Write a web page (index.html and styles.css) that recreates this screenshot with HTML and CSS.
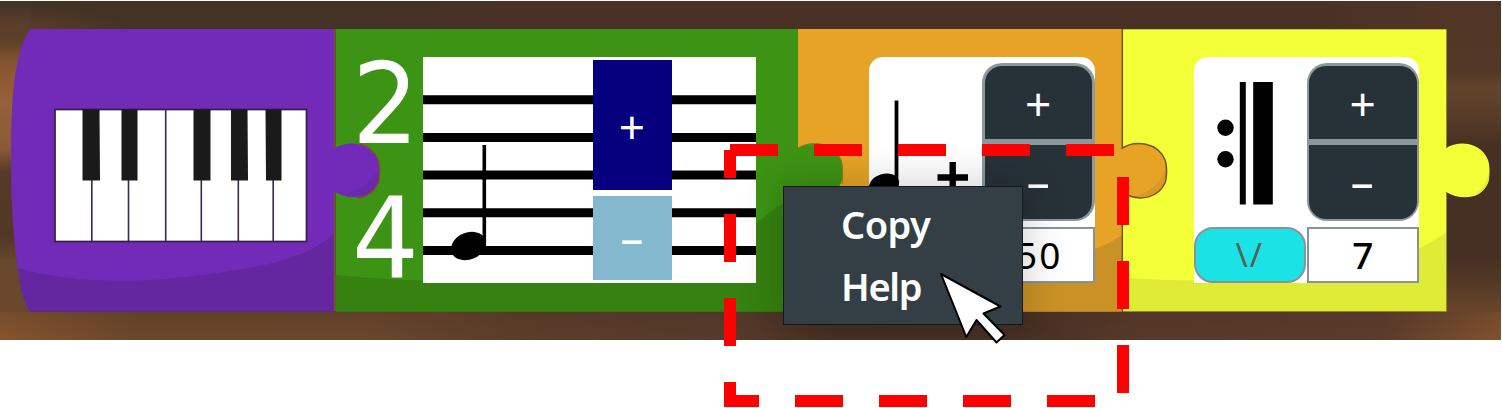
FILE: index.html
```html
<!DOCTYPE html>
<html lang="en">
<head>
<meta charset="utf-8">
<title>Music blocks</title>
<link rel="stylesheet" href="styles.css">
</head>
<body>
<main class="stage">
  <section class="board">
    <article class="block block-key">
      <svg class="shape" width="370" height="283" viewBox="11 29 370 283">
        <path fill="#722bb9" d="M30 29H335V148C348 140 371 142 378 160C380 165 380 178 378 183C371 199 350 201 335 192V311.5H30C18 294 11 230 11 160C11 100 14 52 30 29Z"/>
        <path fill="#64279f" d="M18 268C70 283 135 283 185 277C245 270 302 263 335 233V311.5H30C23 301 20 288 18 268Z"/>
        <path fill="#64279f" d="M345 194C362 190 374 181 379 166C380 172 380 178 378 183C372 196 357 200 345 194Z" opacity=".5"/>
        <path fill="none" stroke="#84483f" stroke-width="1.5" d="M334.5 29V148M360 144C371 147 376 155 378 160C380 165 380 178 378 183C375 191 367 197 358 198M334.5 193V311"/>
      </svg>
      <svg class="piano" width="254" height="135" viewBox="54 108 254 135">
        <rect x="55" y="109.500" width="251.5" height="132" fill="#fff" stroke="#302044" stroke-width="1.7"/>
        <path stroke="#3c2751" stroke-width="1.6" d="M91.800 180V241M128.500 180V241M165.700 109V241M201.300 174V241M238.300 180V241M273.200 180V241"/>
        <path fill="#1a1a1a" d="M82.500 109.500H99.500L100 180.500H82.500ZM121.500 109.500H137.500V180.500H121.500ZM193.500 109.500H210.500V180.500H193.500ZM231 109.500H247.500L248 180.500H231ZM265.500 109.500H281.500V180.500H266Z"/>
      </svg>
    </article>

    <article class="block block-meter">
      <svg class="shape" width="510" height="283" viewBox="335 29 510 283">
        <path fill="#3d9414" d="M335.500 29H798V148C811 140 834 142 841 160C843 165 843 178 841 183C834 199 813 201 798 192V311.500H335.500Z"/>
        <path fill="#358210" d="M335.500 275C470 288 700 286 756 224C775 207 788 200 798 194V311.500H335.500Z"/>
        <path fill="none" stroke="#927a1c" stroke-width="1" d="M798 148C811 140 834 142 841 160C843 165 843 178 842 184"/>
      </svg>
      <div class="meter-numbers"><span>2</span><span>4</span></div>
      <div class="staff">
        <svg class="staff-lines" width="333" height="226" viewBox="423 57 333 226">
          <path stroke="#000" stroke-width="9" d="M423 99.800H756M423 137.500H756M423 175H756M423 212.700H756M423 250.500H756"/>
          <path stroke="#000" stroke-width="3.600" d="M484.300 145V246"/>
          <ellipse cx="468.500" cy="246" rx="18" ry="13.500" transform="rotate(-22 468.500 246)"/>
        </svg>
        <div class="meter-buttons">
          <button class="up"><span class="plus">+</span></button>
          <button class="down"><span class="minus">-</span></button>
        </div>
      </div>
    </article>

    <article class="block block-tempo">
      <svg class="shape" width="370" height="283" viewBox="798 29 370 283">
        <path fill="#e6a325" d="M798 29H1122V148C1135 140 1158 142 1165 160C1168 165 1168 178 1165 183C1158 199 1137 201 1122 192V311.500H798Z"/>
        <path fill="#ca9226" d="M798 273C900 282 1060 278 1122 235V311.500H798Z"/>
        <path fill="#c88c25" opacity=".45" d="M1138 196C1153 190 1162 181 1166 167V180C1161 195 1150 199 1138 196Z"/>
        <path fill="none" stroke="#765426" stroke-width="1.500" d="M1122.300 29V148C1135 140 1158 142 1165 160C1167 165 1167 178 1165 183C1158 198 1141 201 1127 195M1122.300 194V311"/>
      </svg>
      <div class="panel">
        <svg class="symbol" width="113" height="170" viewBox="869 57 113 170">
          <path stroke="#000" stroke-width="3.800" d="M896.500 100.500V186"/>
          <ellipse cx="884" cy="185" rx="15.500" ry="11" transform="rotate(-18 884 185)"/>
          <path stroke="#000" stroke-width="6.400" d="M937.500 177.500H968M952.700 162V193"/>
        </svg>
        <div class="controls">
          <div class="stepper"><button><span class="plus">+</span></button><button><span class="minus">-</span></button></div>
          <output class="wide">50</output>
        </div>
      </div>
    </article>

    <article class="block block-repeat">
      <svg class="shape" width="369" height="283" viewBox="1123 29 369 283">
        <path fill="#f3ff37" d="M1123 29H1446V148C1459 140 1481 142 1488 160C1490 165 1490 178 1488 183C1481 199 1461 201 1446 192V311.500H1123Z"/>
        <path fill="#e0eb35" d="M1123 278C1200 282 1295 284 1370 267C1405 258 1429 244 1446 233V311.500H1123Z"/>
        <path fill="#e0eb35" d="M1473 196C1481 191 1487 184 1489 172V180C1485 191 1479 195 1473 196Z"/>
        <path fill="none" stroke="#8e8b2d" stroke-width="1" d="M1123 29H1446.500V148M1446.500 192V311.500H1123"/>
      </svg>
      <div class="panel">
        <div class="symbol-column">
          <svg class="symbol" width="113" height="170" viewBox="1193.500 57 113 170">
            <path d="M1239.300 82H1245.300V204.500H1239.300ZM1252.700 82H1272.300V204.500H1252.700Z"/>
            <circle cx="1225" cy="127.700" r="8.200"/><circle cx="1225" cy="159.300" r="8.200"/>
          </svg>
          <button class="toggle">\/</button>
        </div>
        <div class="controls">
          <div class="stepper"><button><span class="plus">+</span></button><button><span class="minus">-</span></button></div>
          <output>7</output>
        </div>
      </div>
    </article>

    <nav class="menu"><a>Copy</a><a>Help</a></nav>
  </section>

  <svg class="selection" width="1502" height="408" viewBox="0 0 1502 408">
    <path d="M730 150H1123V401H730V150" fill="none" stroke="#f00" stroke-width="12" stroke-dasharray="48 36"/>
  </svg>
  <svg class="pointer" width="70" height="76" viewBox="938 270 70 76">
    <path fill="#fff" stroke="#000" stroke-width="2" stroke-linejoin="round" d="M941 274L1000.500 306.500L983.500 313.500L1004.500 335L996.500 342.500L976.500 320L966.300 337Z"/>
  </svg>
</main>
</body>
</html>
```
FILE: styles.css
```css
* { box-sizing: border-box; }
body { margin: 0; background: #fff; font-family: "Open Sans", "Noto Sans", sans-serif; }
button { padding: 0; border: 0; font: inherit; color: #fff; }
svg { display: block; }

.stage { position: relative; width: 1502px; height: 408px; padding-top: 1px; overflow: hidden; }
.board {
  position: relative;
  display: flex;
  width: 1501px;
  height: 339px;
  padding: 28px 0 0 11px;
  overflow: hidden;
  background:
    radial-gradient(ellipse 130px 24px at 0 28px, #5e402b, #5e402b00),
    linear-gradient(#443426 0, #4e3727 28px, #85552f 62px, #96603b 100px, #8a5a38 148px, #573a27 170px, #523725 235px, #67472d 260px, #6a482d 310px, #85552f 339px) 0 0 / 31px 339px no-repeat,
    linear-gradient(#503526 0, #533827 70px, #62442d 88px, #5a3d29 112px, #463023 145px, #463023 255px, #563a27 285px, #80522f 339px) 1440px 0 / 61px 339px no-repeat,
    linear-gradient(90deg, #443225 0, #443225 25%, #493225 34%, #493225 88%, #503526 96%);
}
.board::before {
  content: "";
  position: absolute;
  inset: auto 0 0;
  height: 28px;
  background:
    linear-gradient(#3b291e30, #3b291e00),
    linear-gradient(90deg, #85552f 0, #6b472b 9%, #6a472d 24%, #5c3d29 34%, #563a29 50%, #493024 56%, #493125 68%, #573929 76%, #5b3c2a 92%, #80522f);
}
.block { position: relative; height: 283px; flex: none; }
.shape { position: absolute; inset: 0 auto auto 0; }
.block-key { z-index: 4; width: 324px; padding: 79px 0 0 43px; }
.piano { position: relative; }
.block-meter { z-index: 3; display: flex; width: 463px; padding: 28px 0 0 20px; }
.block-tempo { z-index: 2; width: 325px; padding: 28px 0 0 71px; }
.block-repeat { z-index: 1; width: 323px; padding: 28px 0 0 70.500px; }

.meter-numbers {
  position: relative;
  display: flex;
  flex-direction: column;
  width: 68px;
  height: 270px;
  margin-top: -20.500px;
  color: #fff;
  font: 112px/134px "DejaVu Sans", sans-serif;
}
.meter-numbers span { transform: scaleX(.94); transform-origin: 0 50%; margin-left: -3px; }
.staff { position: relative; width: 333px; height: 226px; padding: 3px 0 0 169.500px; background: #fff; }
.staff-lines { position: absolute; inset: 0; }
.meter-buttons { position: relative; display: flex; flex-direction: column; gap: 6px; width: 79px; }
.up { height: 130px; background: #06007f; }
.down { height: 84px; background: #83b8cf; }
.plus, .minus { display: block; font: 46px/46px "Noto Sans", sans-serif; }
.plus { padding-top: 2px; }
.minus { transform: translate(-.5px, -2.500px) scaleX(1.75); }

.panel { position: relative; display: flex; width: 225.500px; height: 226px; background: #fff; border-radius: 14px 14px 0 0; }
.symbol { flex: none; }
.symbol-column { width: 113px; }
.controls { width: 112.500px; padding-top: 6px; }
.stepper { display: flex; flex-direction: column; gap: 6px; height: 158px; padding: 2.500px; background: #8c999c; border-radius: 20px; }
.stepper button { height: 73.500px; background: #273238; border-radius: 17px 17px 0 0; }
.stepper button:last-child { border-radius: 0 0 17px 17px; }
output { display: block; height: 56px; margin-top: 6px; border: 2.500px solid #84929a; background: #fff; color: #000; text-align: center; font: 500 37px/51px "Noto Sans", sans-serif; }
.wide { letter-spacing: 2px; font-weight: 400; padding-left: 2px; }
.toggle { width: 112.500px; height: 56px; border: 2.500px solid #8b9298; border-radius: 19px; background: #1be3e5; color: #5e5b59; font: 33px/50px "Noto Sans", sans-serif; letter-spacing: 2px; }

.menu {
  position: absolute;
  z-index: 5;
  left: 783px;
  top: 185px;
  display: flex;
  flex-direction: column;
  width: 239.500px;
  height: 138.500px;
  padding: 5.500px 0 0 57px;
  border: 1.500px solid #111a1f;
  background: #333e45;
  box-shadow: 0 0 34px 8px #00000026;
  color: #fff;
  font: 600 38px/62px "Noto Sans", sans-serif;
  letter-spacing: -1.300px;
}
.menu a:first-child { letter-spacing: -.6px; }
.selection { position: absolute; z-index: 6; inset: 0; }
.pointer { position: absolute; z-index: 7; left: 938px; top: 270px; }
```
